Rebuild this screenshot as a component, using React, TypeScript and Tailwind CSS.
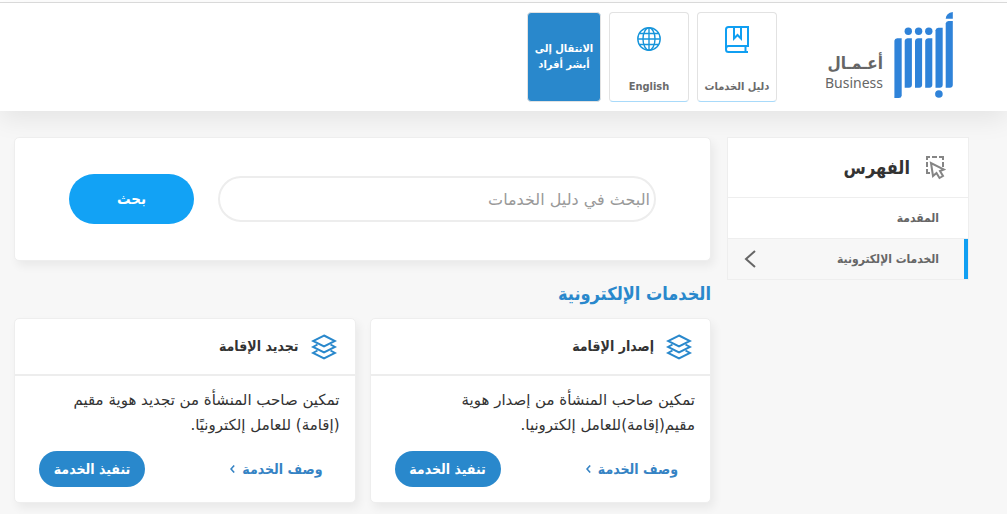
import type { ReactNode } from "react";

const services = [
  {
    title: "إصدار الإقامة",
    lines: ["تمكين صاحب المنشأة من إصدار هوية", "مقيم(إقامة)للعامل إلكترونيا."],
  },
  {
    title: "تجديد الإقامة",
    lines: ["تمكين صاحب المنشأة من تجديد هوية مقيم", "(إقامة) للعامل إلكترونيًا."],
  },
];

function Logo() {
  return (
    <a href="#" className="flex items-start gap-[10px]">
      <svg width="60" height="88" viewBox="0 0 60 88" fill="#2f83d9" aria-hidden="true">
        <path d="M52.700 6.700Q53 1 59.800 0V6.700Z" />
        <path d="M52.700 11.500Q53 9 55.500 9H59.800V73Q59.500 75.700 57 75.700H52.700Z" />
        <path d="M42.500 18.200Q42.800 15.700 45.300 15.700H49.700V73Q49.400 75.700 46.900 75.700H42.500Z" />
        <path d="M32.200 28.800Q32.500 26.300 35 26.300H39.300V73Q39 75.700 36.500 75.700H32.200Z" />
        <path d="M22 28.800Q22.300 26.300 24.800 26.300H29.100V73Q28.800 75.700 26.300 75.700H22Z" />
        <path d="M11.700 28.800Q12 26.300 14.500 26.300H18.900V73Q18.600 75.700 16.100 75.700H11.700Z" />
        <path d="M1.400 28.800Q1.700 26.300 4.200 26.300H8.700V83.500Q8.400 86 5.900 86H1.400Z" />
        <circle cx="15.300" cy="19.200" r="3.700" />
        <circle cx="25.600" cy="19.200" r="3.700" />
        <circle cx="35.800" cy="19.200" r="3.700" />
        <circle cx="45.900" cy="82" r="3.800" />
      </svg>
      <span className="flex flex-col items-start pt-[39px] text-[#666]">
        <span className="text-[17px] leading-6 font-bold whitespace-nowrap">أعـمـال</span>
        <span className="font-['Noto_Sans'] text-[14px] leading-4">Business</span>
      </span>
    </a>
  );
}

function BookIcon() {
  return (
    <svg width="24" height="28" viewBox="0 0 24 28" fill="none" stroke="#109ff2" strokeWidth="2" aria-hidden="true">
      <path d="M23 26H3.500Q1 26 1 23.500V3.500Q1 1 3.500 1H23V20H3.500Q1 20 1 23M20.500 20V26" />
      <path d="M9 1V12.500L12.500 9L16 12.500V1" />
    </svg>
  );
}

function GlobeIcon() {
  return (
    <svg width="24" height="26" viewBox="0 0 24 26" fill="none" stroke="#1795db" strokeWidth="1.400" aria-hidden="true">
      <circle cx="12" cy="13" r="11.200" />
      <ellipse cx="12" cy="13" rx="6" ry="11.200" />
      <path d="M12 2V24M1 13H23M2.500 7.500H21.500M2.500 18.500H21.500" />
    </svg>
  );
}

function SelectIcon() {
  return (
    <svg width="20" height="26" viewBox="0 0 20 26" fill="none" stroke="#858585" strokeWidth="2" aria-hidden="true">
      <path d="M0 2H4M6 2H11M13 2H18M1 2V5M1 7V12M1 14V18M0 18H4M17 2V5M17 7V12" />
      <path d="M5 8L7 21L10.500 18L13.500 23L17 21L14 16L18 14.500Z" />
    </svg>
  );
}

function LayersIcon() {
  return (
    <svg width="26" height="26" viewBox="0 0 26 26" fill="none" stroke="#2988cc" strokeWidth="2" aria-hidden="true">
      <path d="M13 1.500L24 7L13 12.500L2 7Z" />
      <path d="M6.500 10.500L2 13L13 18.500L24 13L19.500 10.500" />
      <path d="M6.500 16.500L2 19L13 24.500L24 19L19.500 16.500" />
    </svg>
  );
}

function HeaderTile({ icon, label }: { icon: ReactNode; label: string }) {
  return (
    <a
      href="#"
      className="flex h-[90px] w-20 flex-col items-center justify-between rounded border border-[#e2e2e2] border-b-[#a8dafa] pt-[13px] pb-[6px] text-[11px] leading-4 font-bold whitespace-nowrap text-[#6b6b6b]"
    >
      {icon}
      {label}
    </a>
  );
}

function ServiceCard({ title, lines }: { title: string; lines: string[] }) {
  return (
    <article className="rounded-[5px] border border-[#eee] bg-white shadow-[3px_5px_10px_rgba(0,0,0,0.06)]">
      <div className="flex h-[57px] items-center gap-3 border-b-2 border-[#ededed] px-[18px]">
        <LayersIcon />
        <h3 className="text-[14px] font-bold text-[#333]">{title}</h3>
      </div>
      <p className="px-[15px] pt-3 font-['DejaVu_Sans',sans-serif] text-[15px] leading-[25px] whitespace-nowrap text-[#333]">
        {lines[0]}
        <br />
        {lines[1]}
      </p>
      <div className="flex items-center justify-between pt-[13px] pr-8 pb-[15px] pl-6">
        <a href="#" className="flex items-center gap-[7px] text-[14px] font-bold text-[#3583c4]">
          وصف الخدمة
          <svg width="5" height="8" viewBox="0 0 5 8" fill="none" stroke="currentColor" strokeWidth="1.600" aria-hidden="true">
            <path d="M4.200 0.500L1 4L4.200 7.500" />
          </svg>
        </a>
        <button className="h-9 w-[106px] rounded-full bg-[#2988cc] text-[14px] font-bold whitespace-nowrap text-white">
          تنفيذ الخدمة
        </button>
      </div>
    </article>
  );
}

export default function App() {
  return (
    <div
      dir="rtl"
      className="min-h-screen bg-white pt-0.5 font-['DejaVu_Sans_Condensed','DejaVu_Sans',sans-serif]"
    >
      <div className="bg-[#f7f7f7]">
        <header className="flex items-start gap-12 border-t border-[#d9d9d9] bg-white py-[9px] pr-[54px] shadow-[0_8px_24px_rgba(0,0,0,0.08)]">
          <Logo />
          <nav className="flex gap-2">
            <HeaderTile icon={<BookIcon />} label="دليل الخدمات" />
            <HeaderTile icon={<GlobeIcon />} label="English" />
            <a
              href="#"
              className="flex h-[90px] w-[74px] items-center justify-center rounded border border-[#e2e2e2] bg-[#2988cc] text-center text-[11px] leading-4 font-bold whitespace-nowrap text-white"
            >
              الانتقال إلى
              <br />
              أبشر أفراد
            </a>
          </nav>
        </header>

        <main className="flex items-start gap-4 pt-[26px] pr-[38px] pb-3 pl-[14px]">
          <aside className="w-[242px] shrink-0 border border-[#eee] bg-white">
            <div className="flex h-[59px] items-center gap-4 pr-[22px]">
              <SelectIcon />
              <h2 className="text-[18px] font-bold text-[#333]">الفهرس</h2>
            </div>
            <ul className="text-[12px] font-bold text-[#666]">
              <li className="border-t border-[#eee]">
                <a href="#" className="flex h-10 items-center pr-[29px]">
                  المقدمة
                </a>
              </li>
              <li className="border-t border-[#eee]">
                <a href="#" className="flex h-10 items-center justify-between border-r-4 border-[#109ff2] bg-[#f7f7f7] pr-[25px] pl-4">
                  الخدمات الإلكترونية
                  <svg width="12" height="18" viewBox="0 0 12 18" fill="none" stroke="#666" strokeWidth="2" aria-hidden="true">
                    <path d="M11 1L2 9L11 17" />
                  </svg>
                </a>
              </li>
            </ul>
          </aside>

          <div className="min-w-0 flex-1">
            <form className="flex items-center gap-6 rounded-[5px] border border-[#eee] bg-white px-[54px] py-9 shadow-[3px_5px_10px_rgba(0,0,0,0.06)]">
              <input
                type="search"
                aria-label="البحث في دليل الخدمات"
                placeholder="البحث في دليل الخدمات"
                className="h-[46px] min-w-0 flex-1 rounded-full border-2 border-[#ededed] px-1 font-['DejaVu_Sans',sans-serif] text-[16px] placeholder:text-[#999]"
              />
              <button type="button" className="h-[50px] w-[125px] rounded-full bg-[#12a2f5] text-[15px] font-bold text-white">
                بحث
              </button>
            </form>
            <h2 className="pt-[19px] pb-[10px] text-[18px] leading-7 font-bold text-[#2988cc]">الخدمات الإلكترونية</h2>
            <div className="grid grid-cols-2 gap-[14px]">
              {services.map((s) => (
                <ServiceCard key={s.title} title={s.title} lines={s.lines} />
              ))}
            </div>
          </div>
        </main>
      </div>
    </div>
  );
}
